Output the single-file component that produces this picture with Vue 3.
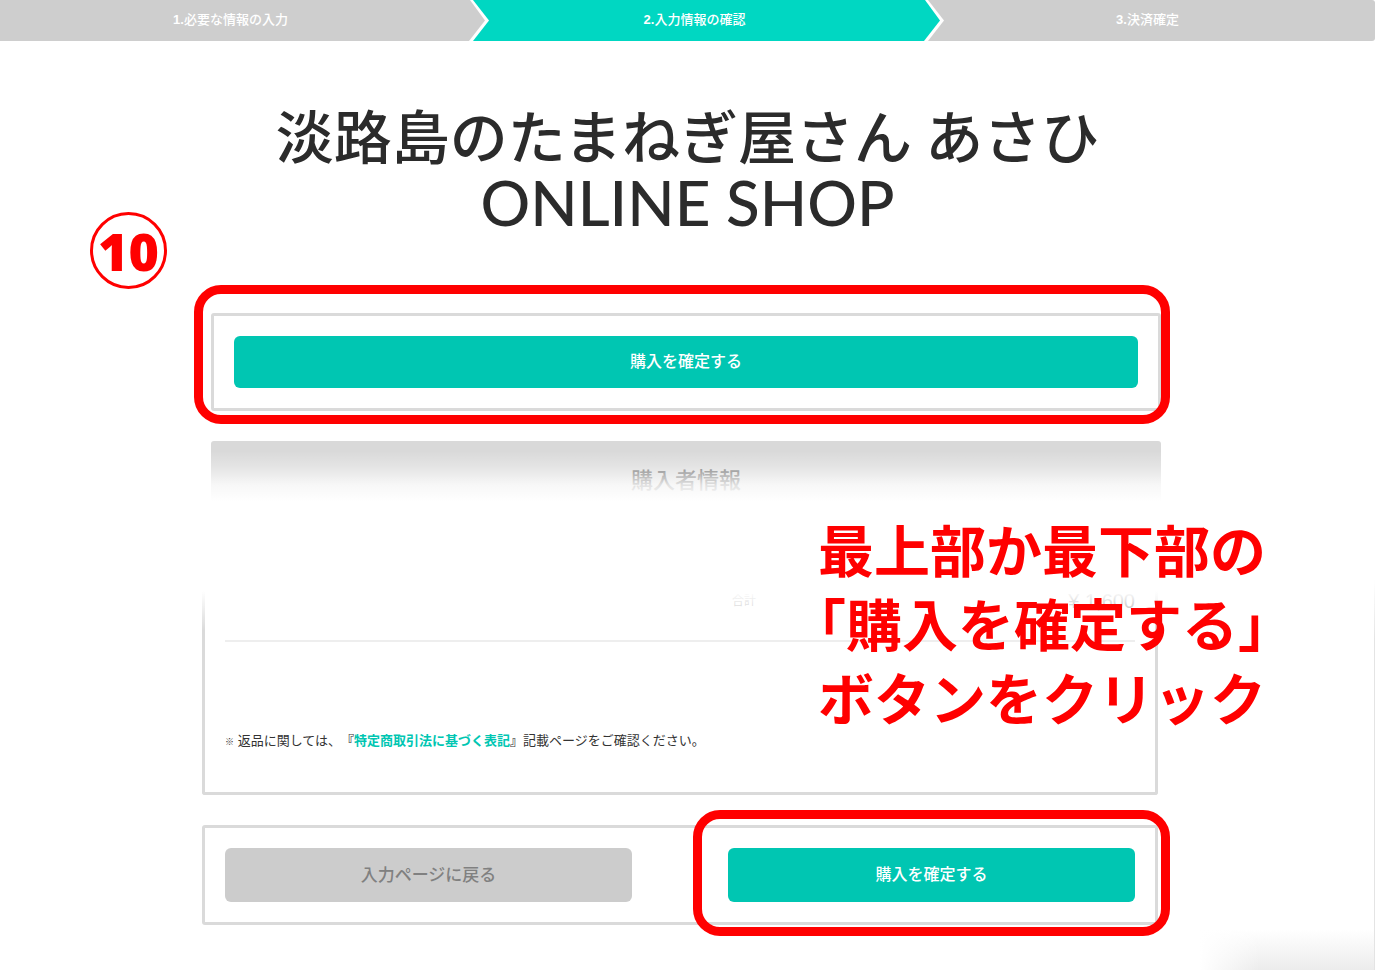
<script setup>
const steps = [
  { number: '1.', label: '必要な情報の入力', kind: 'first' },
  { number: '2.', label: '入力情報の確認', kind: 'current' },
  { number: '3.', label: '決済確定', kind: 'last' },
]
const guide = ['最上部か最下部の', '「購入を確定する」', 'ボタンをクリック']
</script>

<template>
  <div class="page">
    <ol class="steps">
      <li v-for="step in steps" :key="step.label" class="step" :class="step.kind">
        <b>{{ step.number }}</b>{{ step.label }}
        <svg v-if="step.kind !== 'last'" class="arrow" viewBox="0 0 20 41" aria-hidden="true">
          <path class="edge" d="M0 0H4L20 20.5L4 41H0Z" />
          <path class="tip" d="M0 0H1L16 20.5L0 41Z" />
        </svg>
      </li>
    </ol>

    <h1 class="shop">
      <span>淡路島のたまねぎ屋さん あさひ</span>
      <span class="latin">ONLINE SHOP</span>
    </h1>
    <span class="number">10</span>

    <main>
      <div class="upper">
        <section class="card">
          <button type="button" class="btn primary">購入を確定する</button>
          <span class="ring ring-top"></span>
        </section>
        <section class="buyer">
          <h2>購入者情報</h2>
        </section>
      </div>

      <div class="lower">
        <section class="panel">
          <div class="total">
            <span>合計</span>
            <span class="price">¥ 1,600</span>
          </div>
          <p class="note">
            <small>※</small> 返品に関しては、<b>『</b><a href="#">特定商取引法に基づく表記</a><b>』</b>記載ページをご確認ください。
          </p>
          <p class="guide">
            <span v-for="line in guide" :key="line">{{ line }}</span>
          </p>
        </section>
        <section class="card pair">
          <button type="button" class="btn back">入力ページに戻る</button>
          <div class="slot">
            <button type="button" class="btn primary">購入を確定する</button>
            <span class="ring ring-bottom"></span>
          </div>
        </section>
      </div>
    </main>
    <span class="shade"></span>
    <span class="side"></span>
  </div>
</template>

<style>
body {
  margin: 0;
  background: #fff;
}
</style>

<style scoped>
.page {
  position: relative;
  min-height: 100vh;
  overflow: hidden;
  box-sizing: border-box;
  font-family: "Liberation Sans", "Noto Sans CJK JP", sans-serif;
  color: #333;
}
.steps {
  display: grid;
  grid-template-columns: 473fr 455fr 447fr;
  margin: 0;
  padding: 0;
  list-style: none;
}
.step {
  position: relative;
  box-sizing: border-box;
  height: 41px;
  padding-right: 12px;
  background: #cecece;
  color: #fff;
  font-size: 13px;
  font-weight: 500;
  line-height: 39px;
  text-align: center;
}
.first {
  z-index: 2;
}
.current {
  z-index: 1;
  background: #00d7c2;
}
.last {
  padding-right: 8px;
  border-radius: 0 3px 3px 0;
}
.arrow {
  position: absolute;
  top: 0;
  right: -16px;
  width: 20px;
  height: 41px;
}
.edge {
  fill: #fff;
}
.tip {
  fill: #cecece;
}
.current .tip {
  fill: #00d7c2;
}
.shop {
  margin: 59px 0 77px;
  color: #2b2b2b;
  font-family: "Noto Sans CJK JP", sans-serif;
  font-size: 58px;
  font-weight: 500;
  line-height: 68px;
  text-align: center;
}
.shop span {
  display: block;
}
.shop .latin {
  font-family: Lato, sans-serif;
  font-size: 62px;
}
.number {
  position: absolute;
  top: 212px;
  left: 90px;
  box-sizing: border-box;
  width: 77px;
  height: 77px;
  border: 3px solid #f00;
  border-radius: 50%;
  color: #f00;
  font-family: "Open Sans", sans-serif;
  font-size: 52px;
  font-weight: 800;
  line-height: 71px;
  text-align: center;
}
.upper {
  max-width: 950px;
  margin: 0 auto;
  padding-right: 3px;
}
.lower {
  max-width: 956px;
  margin: 0 auto;
  padding-right: 15px;
}
.card {
  position: relative;
  padding: 20px;
  border: 3px solid #dadada;
  border-radius: 3px;
}
.btn {
  display: block;
  width: 100%;
  height: 52px;
  margin: 0;
  padding: 0 0 4px;
  border: 0;
  border-radius: 6px;
  font-family: inherit;
  font-size: 16px;
  font-weight: 500;
}
.primary {
  background: #00c6b2;
  color: #fff;
}
.back {
  background: #ccc;
  color: #808080;
  font-size: 17px;
}
.ring {
  position: absolute;
  border: 9px solid #f00;
  border-radius: 27px;
  pointer-events: none;
}
.ring-top {
  inset: -31px -12px -16px -20px;
}
.ring-bottom {
  inset: -38px -35px -34px -35px;
}
.buyer {
  position: relative;
  height: 150px;
  margin-top: 30px;
  border-radius: 3px 3px 0 0;
  background: #d9d9d9;
}
.buyer h2 {
  margin: 0;
  padding-top: 24px;
  color: #666;
  font-size: 22px;
  font-weight: 500;
  line-height: 32px;
  text-align: center;
}
.buyer::after {
  position: absolute;
  inset: 0;
  background: linear-gradient(rgba(255, 255, 255, 0) 10px, rgba(255, 255, 255, 0.3) 26px, rgba(255, 255, 255, 0.8) 44px, #fff 60px);
  content: "";
}
.panel {
  position: relative;
  box-sizing: border-box;
  height: 204px;
  padding: 0 20px;
  border: solid #dadada;
  border-width: 0 3px 3px;
  border-radius: 0 0 3px 3px;
}
.panel::before {
  position: absolute;
  top: 0;
  right: -3px;
  left: -3px;
  height: 40px;
  background: linear-gradient(#fff, rgba(255, 255, 255, 0));
  content: "";
}
.total {
  display: flex;
  justify-content: space-between;
  box-sizing: border-box;
  height: 51px;
  padding-left: 507px;
  border-bottom: 2px solid #eee;
  color: #aaa;
  font-size: 12px;
  line-height: 20px;
}
.price {
  color: #888;
  font-size: 20px;
}
.note {
  margin: 89px 0 0;
  font-size: 13px;
  line-height: 20px;
  text-spacing-trim: space-all;
}
.note small {
  font-size: 9px;
}
.note a {
  color: #00c6b2;
  font-weight: 700;
  text-decoration: none;
}
.guide {
  position: absolute;
  top: -80px;
  right: -139px;
  margin: 0;
  color: #f00;
  font-family: "Noto Sans CJK JP", sans-serif;
  font-size: 56px;
  font-weight: 700;
  line-height: 74px;
  text-align: center;
  white-space: nowrap;
}
.guide span {
  display: block;
}
.pair {
  display: grid;
  grid-template-columns: 1fr 1fr;
  gap: 96px;
  margin-top: 30px;
}
.pair .btn {
  height: 54px;
}
.slot {
  position: relative;
}
.side {
  position: absolute;
  top: 580px;
  right: 0;
  bottom: 0;
  width: 1px;
  background: linear-gradient(#fff, #e4e4e4 60px);
}
.shade {
  position: absolute;
  right: 0;
  bottom: 0;
  width: 175px;
  height: 40px;
  background: linear-gradient(90deg, #fff, rgba(255, 255, 255, 0) 60px), linear-gradient(#fff, #ececec);
}
</style>
